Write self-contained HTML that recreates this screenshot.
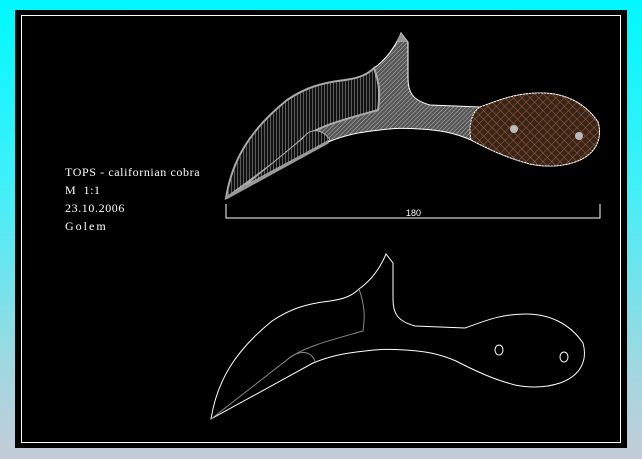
<!DOCTYPE html>
<html><head><meta charset="utf-8"><style>
html,body{margin:0;padding:0;width:642px;height:459px;overflow:hidden;background:linear-gradient(#00f8ff 0%,#40f0f8 40%,#a0d8e0 80%,#c4ccd8 100%);}
#blk{position:absolute;left:15px;top:10px;width:612px;height:438px;background:#000;}
#frm{position:absolute;left:21px;top:15px;width:598px;height:426px;border:1px solid #fff;}
.t{position:absolute;left:65px;color:#fff;font-family:"Liberation Serif",serif;font-size:12px;letter-spacing:0.6px;}
svg{position:absolute;left:0;top:0}
</style></head><body>
<div id="blk"></div><div id="frm"></div>
<div class="t" style="top:165px">TOPS - californian cobra</div>
<div class="t" style="top:183px">M&nbsp; 1:1</div>
<div class="t" style="top:201px">23.10.2006</div>
<div class="t" style="top:219px;letter-spacing:2px">Golem</div>
<svg width="642" height="459">
<defs>
<pattern id="h1" width="3" height="3" patternUnits="userSpaceOnUse" patternTransform="rotate(45)"><rect width="3" height="3" fill="#555"/><line x1="0" y1="0" x2="0" y2="3" stroke="#bbb" stroke-width="1"/></pattern>
<pattern id="h2" width="3" height="3" patternUnits="userSpaceOnUse"><rect width="3" height="3" fill="#111"/><line x1="0" y1="0" x2="0" y2="3" stroke="#ccc" stroke-width="0.8"/></pattern>
<pattern id="h3" width="6" height="6" patternUnits="userSpaceOnUse" patternTransform="rotate(45)"><rect width="6" height="6" fill="#3a2418"/><path d="M0 0V6M0 0H6" stroke="#9a6040" stroke-width="1"/></pattern>
<path id="knife" d="M226 198 C232 160 250 130 287 100 C305 88 320 83 345 80 C360 78 368 74 374 68 C388 58 396 45 401 33 L408 42 L408 78 C408 92 412 100 430 105 L480 107 C500 100 515 93 541 93 C565 93 585 103 598 122 C603 140 595 155 575 162 C560 167 545 167 530 164 C515 160 500 155 471 140 C455 133 440 130 420 129 C405 128 395 128 380 130 C360 132 345 135 328 142 Z"/>
</defs>
<use href="#knife" fill="url(#h1)" stroke="#fff" stroke-width="1"/>
<path d="M226 198 C232 160 250 130 287 100 C305 88 320 83 345 80 C360 78 368 74 374 68 C380 85 380 95 378 110 C350 118 320 125 303 138 C280 160 250 180 226 198Z" fill="url(#h2)" stroke="#aaa" stroke-width="2"/>
<path d="M303 138 C310 128 322 128 330 140 L246 185Z" fill="url(#h2)" stroke="#aaa" stroke-width="1"/>
<path d="M226 198 L328 142" stroke="#999" stroke-width="3"/>
<path d="M480 107 C500 100 515 93 541 93 C565 93 585 103 598 122 C603 140 595 155 575 162 C560 167 545 167 530 164 C515 160 500 155 471 140 C468 125 472 112 480 107Z" fill="url(#h3)" stroke="#fff" stroke-width="1" stroke-dasharray="2 1"/>
<circle cx="514" cy="129" r="4" fill="#bbb"/><circle cx="579" cy="136" r="4" fill="#bbb"/>
<path d="M398 38 L401 33 L408 42 L397 42Z" fill="#999"/>
<path d="M226 204V218H600V204" stroke="#fff" fill="none" stroke-width="1"/>
<text x="406" y="216" fill="#fff" font-family="Liberation Sans,sans-serif" font-size="9">180</text>
<g transform="translate(-15,221)">
<use href="#knife" fill="none" stroke="#fff" stroke-width="1"/>
<path d="M374 68 C380 85 380 95 378 110 C350 118 320 125 303 138 L226 198" fill="none" stroke="#888" stroke-width="1"/>
<path d="M303 138 C312 130 325 128 330 140" fill="none" stroke="#888" stroke-width="1"/>
<ellipse cx="514" cy="129" rx="4" ry="5" fill="none" stroke="#fff"/>
<ellipse cx="579" cy="136" rx="4" ry="5" fill="none" stroke="#fff"/>
</g>
</svg>
</body></html>
